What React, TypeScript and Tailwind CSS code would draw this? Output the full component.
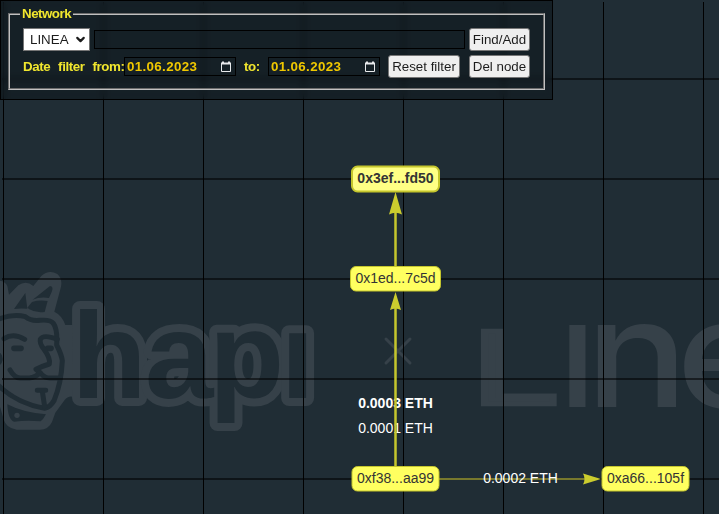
import { ChevronDown } from 'lucide-react';
import { clsx } from 'clsx';

interface GraphNode {
  id: string;
  label: string;
  x: number;
  y: number;
  width: number;
  selected?: boolean;
}

const nodes: GraphNode[] = [
  { id: 'fd50', label: '0x3ef...fd50', x: 395.5, y: 179, width: 87, selected: true },
  { id: '7c5d', label: '0x1ed...7c5d', x: 395.5, y: 279, width: 90 },
  { id: 'aa99', label: '0xf38...aa99', x: 395.5, y: 479, width: 87 },
  { id: '105f', label: '0xa66...105f', x: 645.5, y: 479, width: 87 },
];

const columns = [3, 103, 203, 303, 403, 503, 603, 703];
const rows = [78, 178, 278, 378, 478];

function Watermark() {
  return (
    <g fill="#364149">
      {/* mask */}
      <g transform="translate(0 260) scale(0.3333)">
        <path d="M-10 62Q14 60 22 78L27 104L55 76Q78 60 100 78L124 48Q146 28 172 42Q188 56 183 80L163 155Q186 166 196 195H222V411Q205 405 194 420L166 458L156 486Q145 509 120 509H50Q18 505 11 478L0 440H-10Z" />
        <g fill="#202d35">
          <path d="M42 147L76 99L82 146Q60 144 42 147Z" />
          <path d="M98 119L150 78Q162 80 155 96L147 114Q120 110 98 119Z" />
          <path d="M82 143L96 126Q118 119 143 123L134 156Q108 160 88 148Z" />
          <path d="M22 433Q70 458 138 463Q130 478 122 484Q80 480 42 485Q24 480 22 433Z" />
        </g>
        <circle cx="51" cy="466" r="8" />
        <g fill="none" stroke="#202d35" strokeWidth="15" strokeLinecap="round" strokeLinejoin="round">
          <path d="M-6 178Q40 160 76 170Q92 184 120 181Q150 178 160 190Q173 208 170 255Q184 282 187 302Q184 370 162 422Q150 442 134 445Q50 430 -6 375" />
          <path d="M12 236Q40 218 74 238" />
          <path d="M42 265H63M143 265H153" strokeWidth="17" />
          <path d="M172 238Q130 222 121 238Q118 250 132 268Q152 296 148 312Q128 318 108 328L124 342Q134 354 150 354H180" />
          <path d="M30 330Q44 354 60 354H88Q108 352 120 338" />
          <path d="M112 391H137M127 394L134 440" />
        </g>
        <path d="M-4 274Q10 284 8 300Q6 312 -4 318Z" fill="#202d35" />
      </g>

      {/* wordmarks */}
      <g fontFamily="'Liberation Sans', sans-serif" fontWeight="700" fontSize="123">
        <text x="71.5 145 209 280.5" y="397.500" stroke="#364149" strokeWidth="16" strokeLinejoin="round">hapı</text>
        <text x="71.5 145 209 280.5" y="397.500" fill="#202d35">hapı</text>
      </g>
      <path d="M386 339L410 363M410 339L386 363" stroke="#364149" strokeWidth="3" strokeLinecap="round" />
      <g fontFamily="Inter, sans-serif">
        <text
          transform="translate(470.500 403.500) scale(1.580 1)"
          fontSize="101"
          fontWeight="400"
          stroke="#364149"
          strokeWidth="6"
          vectorEffect="non-scaling-stroke"
        >
          L
        </text>
        <text x="558.500" y="407" fontSize="150" fontWeight="500">ı</text>
        <text transform="translate(585.500 407) scale(1.140 1)" fontSize="150" fontWeight="500">n</text>
        <text transform="translate(676.500 407) scale(1.100 1)" fontSize="150" fontWeight="500">e</text>
      </g>
    </g>
  );
}

function Graph() {
  return (
    <svg width="719" height="514" viewBox="0 0 719 514" className="block">
      <Watermark />

      {rows.map((y) => (
        <rect key={y} x="2" y={y} width="717" height="2" fill="#000" fillOpacity="0.55" />
      ))}
      {columns.map((x) => (
        <rect key={x} x={x} y="2" width="1" height="512" fill="#000" />
      ))}

      <g fontFamily="'Liberation Sans', Arial, sans-serif" fontSize="14" textAnchor="middle">
        <g fill="#fff">
          <text x="395.500" y="408" fontWeight="700">0.0003 ETH</text>
          <text x="395.500" y="433">0.0001 ETH</text>
        </g>

        {/* edges */}
        <path d="M395.500 466V300M395.500 266V205" stroke="#c5c62d" strokeWidth="2.500" />
        <path d="M439 479H590" stroke="#77782d" strokeWidth="2" />
        <g fill="#cbcc2e">
          <path d="M395.500 192L402 214.500Q395.500 211 389 214.500Z" />
          <path d="M395.500 292L401 310Q395.500 307 390 310Z" />
          <path d="M601 479L583 484.500Q586 479 583 473.500Z" />
        </g>
        <text x="520.500" y="483" fill="#fff">0.0002 ETH</text>

        {nodes.map((node) => (
          <g key={node.id}>
            <rect
              x={node.x - node.width / 2}
              y={node.y - 12.5}
              width={node.width}
              height={node.selected ? 25 : 24.5}
              rx="5.500"
              fill={node.selected ? '#ffff85' : '#ffff60'}
              stroke="#c5c62d"
              strokeWidth={node.selected ? 2 : 1}
            />
            <text x={node.x} y={node.y + 4} fill="#343434" fontWeight={node.selected ? 700 : 400}>
              {node.label}
            </text>
          </g>
        ))}
      </g>
    </svg>
  );
}

function DateField({ value }: { value: string }) {
  return (
    <div className="flex h-[19px] w-[112px] items-center justify-between border border-black pr-[3px] pl-[2px]">
      <span className="text-[13.333px] tracking-[0.35px] text-[#f0c800]">{value}</span>
      <svg width="12" height="12" viewBox="0 0 12 12" fill="none" stroke="#e8eaec">
        <path d="M1.500 2.500H10.500V10.500H1.500Z" />
        <path d="M1 2.500H11M3 0.500V2M9 0.500V2" strokeWidth="2" />
      </svg>
    </div>
  );
}

function PanelButton({ label, className }: { label: string; className: string }) {
  return (
    <button
      className={clsx(
        'h-[23px] shrink-0 rounded-[3px] border border-[#767676] bg-[#efefef] text-center text-[13.333px] leading-none whitespace-nowrap text-[#1c1c1c]',
        className
      )}
    >
      {label}
    </button>
  );
}

function NetworkPanel() {
  return (
    <div className="absolute top-0 left-0 h-[100px] w-[553px] border border-black bg-[#020a0c]/35 pt-[5px] pl-[7px] backdrop-blur-[3px]">
      <fieldset className="h-[84px] w-[537px] border-2 border-[#c0c0c0] [border-style:groove] pl-[13px]">
        <legend className="-ml-[3px] h-[15px] px-[2px] text-[13.333px] leading-[15px] font-bold tracking-[-0.5px] text-[#f0e62e]">
          Network
        </legend>
        <div className="mt-[7px] flex h-[23px] items-center">
          <div className="flex h-[23px] w-[67px] items-center justify-between border border-[#767676] bg-white pr-[2px] pl-[6px] text-[13.333px] text-[#1c1c1c]">
            LINEA
            <ChevronDown size={13} strokeWidth={4} />
          </div>
          <input className="ml-[4px] h-[19px] w-[371px] border border-black outline-none" />
          <PanelButton label="Find/Add" className="ml-[4px] w-[61px]" />
        </div>
        <div className="mt-[4px] flex h-[23px] items-center font-bold text-[#f0e62e]">
          <span className="w-[101px] text-[13.333px] tracking-[-0.4px] whitespace-nowrap [word-spacing:4.5px]">
            Date filter from:
          </span>
          <DateField value="01.06.2023" />
          <span className="ml-[8px] w-[24px] text-[13.333px] tracking-[-0.4px]">to:</span>
          <DateField value="01.06.2023" />
          <PanelButton label="Reset filter" className="ml-[8px] w-[72px] font-normal" />
          <PanelButton label="Del node" className="ml-[9px] w-[61px] font-normal" />
        </div>
      </fieldset>
    </div>
  );
}

export default function App() {
  return (
    <div className="relative h-[514px] w-[719px] overflow-hidden bg-[#202d35] font-['Liberation_Sans',Arial,sans-serif]">
      <Graph />
      <NetworkPanel />
    </div>
  );
}
